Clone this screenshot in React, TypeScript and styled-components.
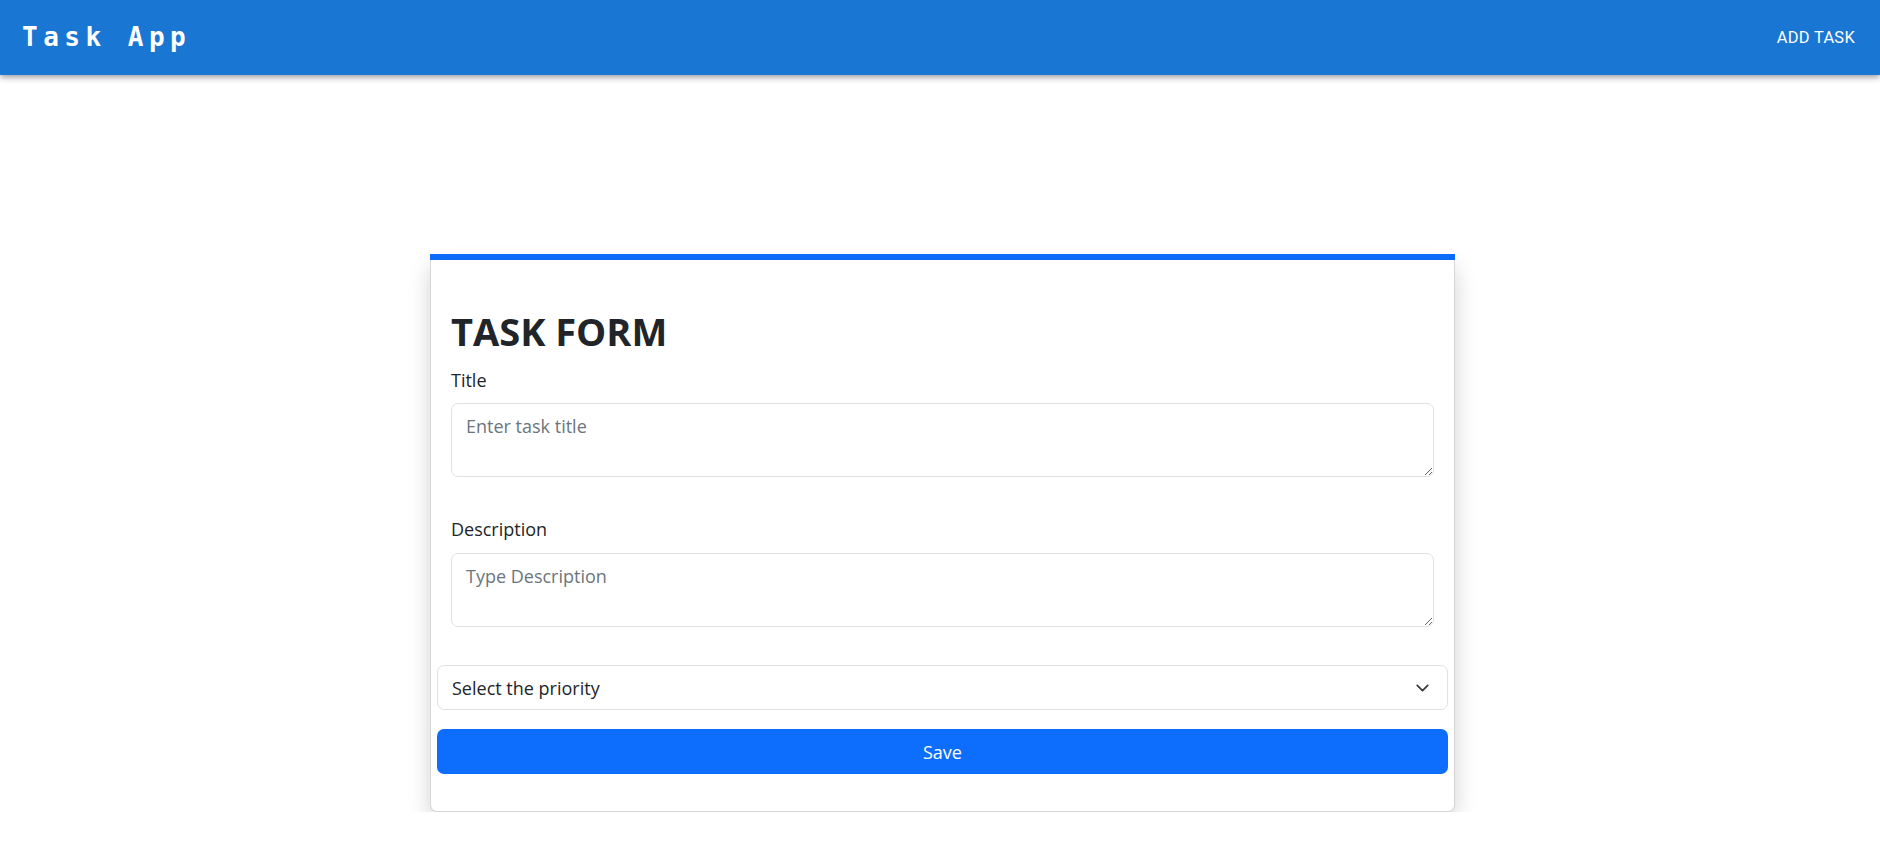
import React from 'react'
import styled, { createGlobalStyle } from 'styled-components'

const GlobalStyle = createGlobalStyle`
  * { box-sizing: border-box; }
  body {
    margin: 0;
    background: #fff;
    font-family: "Open Sans", "Noto Sans", sans-serif;
    color: #212529;
  }
`

const AppBar = styled.header`
  height: 75px;
  background-color: #1976d2;
  color: #fff;
  display: flex;
  align-items: center;
  justify-content: space-between;
  padding: 0 25px 0 22px;
  box-shadow: 0px 2px 4px -1px rgba(0, 0, 0, 0.2), 0px 4px 5px 0px rgba(0, 0, 0, 0.14),
    0px 1px 10px 0px rgba(0, 0, 0, 0.12);
`

const Brand = styled.div`
  font-family: "DejaVu Sans Mono", "Liberation Mono", monospace;
  font-weight: 700;
  font-size: 26px;
  letter-spacing: 5.5px;
  margin-top: -2px;
`

const NavButton = styled.button`
  background: none;
  border: none;
  color: #fff;
  font-family: Roboto, "Liberation Sans", sans-serif;
  font-weight: 400;
  font-size: 16.4px;
  letter-spacing: 0.3px;
  text-transform: uppercase;
  padding: 0;
  cursor: pointer;
`

const Main = styled.main`
  display: flex;
  justify-content: center;
  padding: 179px 0 0 5px;
`

const CardWrap = styled.section`
  width: 1025px;
`

const TopBar = styled.div`
  height: 6px;
  background-color: #0d6efd;
`

const Card = styled.div`
  border: 1px solid #d6d6d6;
  border-top: none;
  border-radius: 0 0 7px 7px;
  box-shadow: 0 8px 22px rgba(0, 0, 0, 0.18);
  padding: 49px 6px 37px;
  background: #fff;
`

const Heading = styled.h2`
  margin: 0 0 11px 14px;
  font-size: 38px;
  font-weight: 700;
  line-height: 1.2;
  color: #212529;
`

const Field = styled.div<{ $gap?: number }>`
  padding: 0 14px;
  margin-bottom: ${(p) => p.$gap ?? 0}px;
`

const Label = styled.label`
  display: block;
  font-size: 18px;
  line-height: 28.8px;
  margin-bottom: 9px;
  color: #212529;
`

const TextArea = styled.textarea`
  display: block;
  width: 100%;
  height: 74px;
  border: 1px solid #dee2e6;
  border-radius: 7px;
  padding: 8px 14px;
  font-family: "Open Sans", "Noto Sans", sans-serif;
  font-size: 18px;
  line-height: 28.8px;
  color: #212529;
  resize: vertical;
  &::placeholder {
    color: #6c757d;
  }
`

const SelectBox = styled.select`
  display: block;
  width: 100%;
  height: 45px;
  appearance: none;
  border: 1px solid #dee2e6;
  border-radius: 7px;
  padding: 0 48px 0 14px;
  font-family: "Open Sans", "Noto Sans", sans-serif;
  font-size: 18px;
  color: #212529;
  background-color: #fff;
  background-image: url("data:image/svg+xml,%3csvg xmlns='http://www.w3.org/2000/svg' viewBox='0 0 16 16'%3e%3cpath fill='none' stroke='%23343a40' stroke-linecap='round' stroke-linejoin='round' stroke-width='2' d='m2 5 6 6 6-6'/%3e%3c/svg%3e");
  background-repeat: no-repeat;
  background-position: right 15px center;
  background-size: 19px 14px;
  margin-bottom: 19px;
`

const SaveButton = styled.button`
  display: block;
  width: 100%;
  height: 45px;
  border: none;
  border-radius: 7px;
  background-color: #0d6efd;
  color: #fff;
  font-family: "Open Sans", "Noto Sans", sans-serif;
  font-size: 18px;
  cursor: pointer;
`

const App = () => {
  return (
    <>
      <GlobalStyle />
      <AppBar>
        <Brand>Task App</Brand>
        <NavButton>Add Task</NavButton>
      </AppBar>
      <Main>
        <CardWrap>
          <TopBar />
          <Card>
            <Heading>TASK FORM</Heading>
            <Field $gap={38}>
              <Label htmlFor="title">Title</Label>
              <TextArea id="title" placeholder="Enter task title" />
            </Field>
            <Field $gap={38}>
              <Label htmlFor="description">Description</Label>
              <TextArea id="description" placeholder="Type Description" />
            </Field>
            <SelectBox defaultValue="">
              <option value="" disabled>
                Select the priority
              </option>
              <option value="low">Low</option>
              <option value="medium">Medium</option>
              <option value="high">High</option>
            </SelectBox>
            <SaveButton type="button">Save</SaveButton>
          </Card>
        </CardWrap>
      </Main>
    </>
  )
}

export default App
